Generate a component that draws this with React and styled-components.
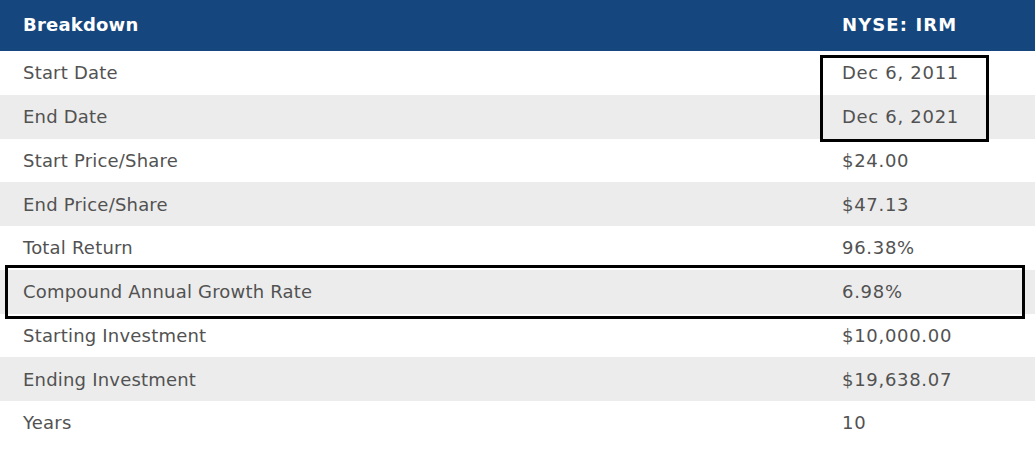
import React from "react";
import styled, { createGlobalStyle } from "styled-components";

const GlobalStyle = createGlobalStyle`
  body {
    margin: 0;
    background: #fff;
    font-family: "DejaVu Sans", "Liberation Sans", sans-serif;
  }
`;

const Wrap = styled.div`
  position: relative;
  width: 1035px;
  height: 451px;
  overflow: hidden;
`;

const Table = styled.div`
  display: grid;
  grid-template-columns: 842px 1fr;
`;

const HeadCell = styled.div`
  background: #15467d;
  color: #fff;
  font-weight: 700;
  font-size: 18px;
  height: 51px;
  display: flex;
  align-items: center;
  padding-left: ${({ first }) => (first ? "23px" : "0")};
  padding-bottom: 2px;
  box-sizing: border-box;
  letter-spacing: ${({ first }) => (first ? "0.2px" : "1.1px")};
`;

const Cell = styled.div`
  background: ${({ shaded }) => (shaded ? "#ececec" : "#fff")};
  color: #525252;
  font-size: 18px;
  height: 43.75px;
  display: flex;
  align-items: center;
  padding-left: ${({ first }) => (first ? "23px" : "0")};
  letter-spacing: ${({ first }) => (first ? "0.2px" : "0.7px")};
`;

const Highlight = styled.div`
  position: absolute;
  border: 3px solid #000;
  box-sizing: border-box;
  pointer-events: none;
`;

const rows = [
  ["Start Date", "Dec 6, 2011"],
  ["End Date", "Dec 6, 2021"],
  ["Start Price/Share", "$24.00"],
  ["End Price/Share", "$47.13"],
  ["Total Return", "96.38%"],
  ["Compound Annual Growth Rate", "6.98%"],
  ["Starting Investment", "$10,000.00"],
  ["Ending Investment", "$19,638.07"],
  ["Years", "10"],
];

export default function App() {
  return (
    <Wrap>
      <GlobalStyle />
      <Table>
        <HeadCell first>Breakdown</HeadCell>
        <HeadCell>NYSE: IRM</HeadCell>
        {rows.map(([label, value], i) => (
          <React.Fragment key={label}>
            <Cell first shaded={i % 2 === 1}>{label}</Cell>
            <Cell shaded={i % 2 === 1}>{value}</Cell>
          </React.Fragment>
        ))}
      </Table>
      <Highlight style={{ left: 820, top: 55, width: 169, height: 87 }} />
      <Highlight style={{ left: 5, top: 265, width: 1020, height: 54 }} />
    </Wrap>
  );
}
